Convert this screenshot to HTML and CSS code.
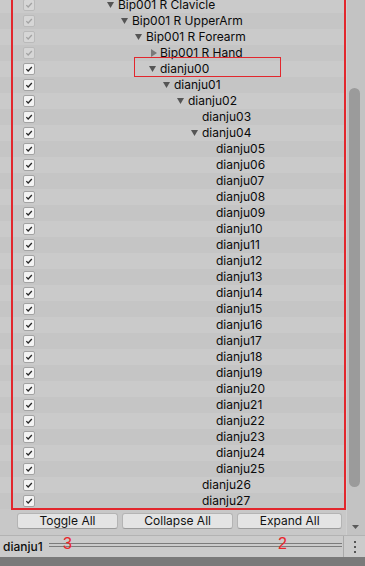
FILE: index.html
```html
<html>
  <head>
    <link rel="stylesheet" href="styles.css">
  </head>

  <body>
    <div class="window">
      <div class="main">
        <div class="tree">
          <div class="tree-view">
            <ul class="rows">
              <li class="row"><span class="check off"><svg viewBox="0 0 12 12"><polyline points="2.8,6.2 5,8.4 9.4,3.6"/></svg></span><span class="node l0"><span class="fold"><svg class="down" viewBox="0 0 7 6"><polygon points="0,0 7,0 3.5,6"/></svg></span>Bip001 R Clavicle</span></li>
              <li class="row"><span class="check off"><svg viewBox="0 0 12 12"><polyline points="2.8,6.2 5,8.4 9.4,3.6"/></svg></span><span class="node l1"><span class="fold"><svg class="down" viewBox="0 0 7 6"><polygon points="0,0 7,0 3.5,6"/></svg></span>Bip001 R UpperArm</span></li>
              <li class="row"><span class="check off"><svg viewBox="0 0 12 12"><polyline points="2.8,6.2 5,8.4 9.4,3.6"/></svg></span><span class="node l2"><span class="fold"><svg class="down" viewBox="0 0 7 6"><polygon points="0,0 7,0 3.5,6"/></svg></span>Bip001 R Forearm</span></li>
              <li class="row"><span class="check off"><svg viewBox="0 0 12 12"><polyline points="2.8,6.2 5,8.4 9.4,3.6"/></svg></span><span class="node l3"><span class="fold"><svg class="right" viewBox="0 0 6 8"><polygon points="0,0 6,4 0,8"/></svg></span>Bip001 R Hand</span></li>
              <li class="row"><span class="check"><svg viewBox="0 0 12 12"><polyline points="2.8,6.2 5,8.4 9.4,3.6"/></svg></span><span class="node l3"><span class="fold"><svg class="down" viewBox="0 0 7 6"><polygon points="0,0 7,0 3.5,6"/></svg></span>dianju00</span></li>
              <li class="row"><span class="check"><svg viewBox="0 0 12 12"><polyline points="2.8,6.2 5,8.4 9.4,3.6"/></svg></span><span class="node l4"><span class="fold"><svg class="down" viewBox="0 0 7 6"><polygon points="0,0 7,0 3.5,6"/></svg></span>dianju01</span></li>
              <li class="row"><span class="check"><svg viewBox="0 0 12 12"><polyline points="2.8,6.2 5,8.4 9.4,3.6"/></svg></span><span class="node l5"><span class="fold"><svg class="down" viewBox="0 0 7 6"><polygon points="0,0 7,0 3.5,6"/></svg></span>dianju02</span></li>
              <li class="row"><span class="check"><svg viewBox="0 0 12 12"><polyline points="2.8,6.2 5,8.4 9.4,3.6"/></svg></span><span class="node l6"><span class="fold"></span>dianju03</span></li>
              <li class="row"><span class="check"><svg viewBox="0 0 12 12"><polyline points="2.8,6.2 5,8.4 9.4,3.6"/></svg></span><span class="node l6"><span class="fold"><svg class="down" viewBox="0 0 7 6"><polygon points="0,0 7,0 3.5,6"/></svg></span>dianju04</span></li>
              <li class="row"><span class="check"><svg viewBox="0 0 12 12"><polyline points="2.8,6.2 5,8.4 9.4,3.6"/></svg></span><span class="node l7"><span class="fold"></span>dianju05</span></li>
              <li class="row"><span class="check"><svg viewBox="0 0 12 12"><polyline points="2.8,6.2 5,8.4 9.4,3.6"/></svg></span><span class="node l7"><span class="fold"></span>dianju06</span></li>
              <li class="row"><span class="check"><svg viewBox="0 0 12 12"><polyline points="2.8,6.2 5,8.4 9.4,3.6"/></svg></span><span class="node l7"><span class="fold"></span>dianju07</span></li>
              <li class="row"><span class="check"><svg viewBox="0 0 12 12"><polyline points="2.8,6.2 5,8.4 9.4,3.6"/></svg></span><span class="node l7"><span class="fold"></span>dianju08</span></li>
              <li class="row"><span class="check"><svg viewBox="0 0 12 12"><polyline points="2.8,6.2 5,8.4 9.4,3.6"/></svg></span><span class="node l7"><span class="fold"></span>dianju09</span></li>
              <li class="row"><span class="check"><svg viewBox="0 0 12 12"><polyline points="2.8,6.2 5,8.4 9.4,3.6"/></svg></span><span class="node l7"><span class="fold"></span>dianju10</span></li>
              <li class="row"><span class="check"><svg viewBox="0 0 12 12"><polyline points="2.8,6.2 5,8.4 9.4,3.6"/></svg></span><span class="node l7"><span class="fold"></span>dianju11</span></li>
              <li class="row"><span class="check"><svg viewBox="0 0 12 12"><polyline points="2.8,6.2 5,8.4 9.4,3.6"/></svg></span><span class="node l7"><span class="fold"></span>dianju12</span></li>
              <li class="row"><span class="check"><svg viewBox="0 0 12 12"><polyline points="2.8,6.2 5,8.4 9.4,3.6"/></svg></span><span class="node l7"><span class="fold"></span>dianju13</span></li>
              <li class="row"><span class="check"><svg viewBox="0 0 12 12"><polyline points="2.8,6.2 5,8.4 9.4,3.6"/></svg></span><span class="node l7"><span class="fold"></span>dianju14</span></li>
              <li class="row"><span class="check"><svg viewBox="0 0 12 12"><polyline points="2.8,6.2 5,8.4 9.4,3.6"/></svg></span><span class="node l7"><span class="fold"></span>dianju15</span></li>
              <li class="row"><span class="check"><svg viewBox="0 0 12 12"><polyline points="2.8,6.2 5,8.4 9.4,3.6"/></svg></span><span class="node l7"><span class="fold"></span>dianju16</span></li>
              <li class="row"><span class="check"><svg viewBox="0 0 12 12"><polyline points="2.8,6.2 5,8.4 9.4,3.6"/></svg></span><span class="node l7"><span class="fold"></span>dianju17</span></li>
              <li class="row"><span class="check"><svg viewBox="0 0 12 12"><polyline points="2.8,6.2 5,8.4 9.4,3.6"/></svg></span><span class="node l7"><span class="fold"></span>dianju18</span></li>
              <li class="row"><span class="check"><svg viewBox="0 0 12 12"><polyline points="2.8,6.2 5,8.4 9.4,3.6"/></svg></span><span class="node l7"><span class="fold"></span>dianju19</span></li>
              <li class="row"><span class="check"><svg viewBox="0 0 12 12"><polyline points="2.8,6.2 5,8.4 9.4,3.6"/></svg></span><span class="node l7"><span class="fold"></span>dianju20</span></li>
              <li class="row"><span class="check"><svg viewBox="0 0 12 12"><polyline points="2.8,6.2 5,8.4 9.4,3.6"/></svg></span><span class="node l7"><span class="fold"></span>dianju21</span></li>
              <li class="row"><span class="check"><svg viewBox="0 0 12 12"><polyline points="2.8,6.2 5,8.4 9.4,3.6"/></svg></span><span class="node l7"><span class="fold"></span>dianju22</span></li>
              <li class="row"><span class="check"><svg viewBox="0 0 12 12"><polyline points="2.8,6.2 5,8.4 9.4,3.6"/></svg></span><span class="node l7"><span class="fold"></span>dianju23</span></li>
              <li class="row"><span class="check"><svg viewBox="0 0 12 12"><polyline points="2.8,6.2 5,8.4 9.4,3.6"/></svg></span><span class="node l7"><span class="fold"></span>dianju24</span></li>
              <li class="row"><span class="check"><svg viewBox="0 0 12 12"><polyline points="2.8,6.2 5,8.4 9.4,3.6"/></svg></span><span class="node l7"><span class="fold"></span>dianju25</span></li>
              <li class="row"><span class="check"><svg viewBox="0 0 12 12"><polyline points="2.8,6.2 5,8.4 9.4,3.6"/></svg></span><span class="node l6"><span class="fold"></span>dianju26</span></li>
              <li class="row"><span class="check"><svg viewBox="0 0 12 12"><polyline points="2.8,6.2 5,8.4 9.4,3.6"/></svg></span><span class="node l6"><span class="fold"></span>dianju27</span></li>
            </ul>
          </div>

          <div class="toolbar">
            <button>Toggle All</button>
            <button>Collapse All</button>
            <button>Expand All</button>
          </div>

          <!-- red annotation boxes -->
          <div class="mark mark-list"></div>
          <div class="mark mark-item"></div>
        </div>

        <div class="scrollbar">
          <div class="thumb"></div>
          <div class="arrow"><svg viewBox="0 0 7 4"><polygon points="0,0 7,0 3.5,4"/></svg></div>
        </div>
      </div>

      <div class="statusbar">
        <span class="current">dianju1</span>
        <span class="slider"></span>
        <span class="menu"><i></i><i></i><i></i></span>
        <span class="note note-3">3</span>
        <span class="note note-2">2</span>
      </div>
      <div class="footer"></div>
    </div>
  </body>
</html>
```

FILE: styles.css
```css
/* general styling */
* {
  box-sizing: border-box;
  margin: 0;
  padding: 0;
}

html,
body {
  height: 100%;
  margin: 0;
}

body {
  background-color: #c8c8c8;
  color: #111;
  font-family: Inter, "Liberation Sans", sans-serif;
  font-size: 12px;
  overflow: hidden;
}

.window {
  display: flex;
  flex-direction: column;
  height: 566px;
}

.main {
  display: flex;
  height: 535px;
}

/* tree */
.tree {
  flex: 1;
  position: relative;
}

.tree-view {
  height: 510px;
  overflow: hidden;
}

.rows {
  list-style-type: none;
  margin-top: -3px;
}

.row {
  align-items: center;
  background-color: #cacaca;
  display: flex;
  height: 16px;
  padding-left: 23px;
  white-space: nowrap;
}

.row:nth-child(even) {
  background-color: #c5c5c5;
}

.check {
  background-color: #f3f3f3;
  border: 1px solid #a3a3a3;
  border-radius: 2px;
  display: block;
  height: 12px;
  width: 12px;
}

.check svg {
  display: block;
  fill: none;
  height: 10px;
  stroke: #262626;
  stroke-width: 1.5;
  width: 10px;
}

.check.off {
  background-color: #d6d6d6;
  border-color: #bababa;
}

.check.off svg {
  stroke: #a2a2a2;
}

.node {
  align-items: center;
  color: #0a0a0a;
  display: flex;
  line-height: 16px;
}

.l0 { margin-left: 69px; }
.l1 { margin-left: 83px; }
.l2 { margin-left: 97px; }
.l3 { margin-left: 111px; }
.l4 { margin-left: 125px; }
.l5 { margin-left: 139px; }
.l6 { margin-left: 153px; }
.l7 { margin-left: 167px; }

.fold {
  align-items: center;
  display: flex;
  height: 16px;
  padding-left: 3px;
  width: 14px;
}

.fold .down {
  fill: #555;
  height: 6px;
  width: 7px;
}

.fold .right {
  fill: #7a7a7a;
  height: 8px;
  margin-left: 2px;
  width: 6px;
}

/* buttons */
.toolbar {
  display: flex;
  gap: 4px;
  padding: 3px 4px 0 17px;
}

.toolbar button {
  background-color: #e4e4e4;
  border: 1px solid #b4b4b4;
  border-bottom-color: #9c9c9c;
  border-radius: 3px;
  color: #111;
  flex: 1 1 auto;
  font-family: Inter, "Liberation Sans", sans-serif;
  font-size: 12px;
  height: 16px;
  line-height: 14px;
}

/* annotations */
.mark {
  border: 2px solid #e2272d;
  position: absolute;
}

.mark-list {
  height: 521px;
  left: 11px;
  top: -11px;
  width: 335px;
}

.mark-item {
  border-width: 1px;
  height: 20px;
  left: 134px;
  top: 57px;
  width: 147px;
}

/* scrollbar */
.scrollbar {
  background-color: #c3c3c3;
  border-left: 1px solid #cfcfcf;
  display: flex;
  flex-direction: column;
  width: 19px;
}

.thumb {
  background-color: #9b9b9b;
  border-radius: 6px;
  height: 399px;
  margin: 88px 0 0 2px;
  width: 11px;
}

.arrow {
  align-items: center;
  display: flex;
  height: 14px;
  margin: auto 0 1px 5px;
}

.arrow svg {
  fill: #5a5a5a;
  height: 4px;
  width: 7px;
}

/* status bar */
.statusbar {
  align-items: center;
  background-color: #cbcbcb;
  border-top: 1px solid #b3b3b3;
  display: flex;
  height: 22px;
  position: relative;
}

.current {
  color: #0d0d0d;
  font-weight: 500;
  padding: 0 6px 0 3px;
}

.slider {
  border-bottom: 1px solid #7c7c7c;
  border-top: 1px solid #7c7c7c;
  flex: 1;
  height: 4px;
  margin-top: -3px;
}

.menu {
  align-items: center;
  border-left: 1px solid #a9a9a9;
  display: flex;
  flex-direction: column;
  gap: 3px;
  height: 100%;
  justify-content: center;
  margin-left: 1px;
  width: 22px;
}

.menu i {
  background-color: #555;
  display: block;
  height: 2px;
  width: 2px;
}

.note {
  color: #e8262b;
  font-family: "Liberation Sans", sans-serif;
  font-size: 16px;
  line-height: 16px;
  position: absolute;
  top: 0;
}

.note-3 {
  left: 63px;
}

.note-2 {
  left: 278px;
}

.footer {
  background-color: #7a7a7a;
  flex: 1;
}
```
